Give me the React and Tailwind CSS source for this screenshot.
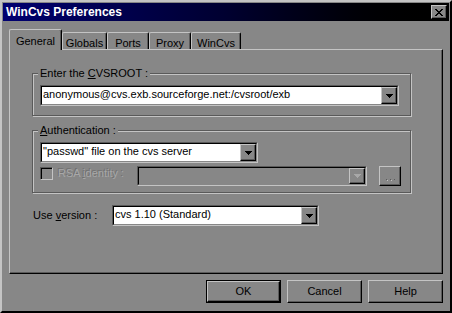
import React from "react";

const Arrow = ({ disabled }) => (
  <svg width="7" height="4" viewBox="0 0 7 4" className="block">
    <path d="M0 0h7v1H0zM1 1h5v1H1zM2 2h3v1H2zM3 3h1v1H3z" fill={disabled ? "#a8a8a8" : "#000"} />
  </svg>
);

const ArrowBtn = ({ disabled }) => (
  <div className="w-[16px] h-full bg-[#878787] border border-t-[#c4c4c4] border-l-[#c4c4c4] border-r-black border-b-black shadow-[inset_-1px_-1px_0_#5a5a5a] flex items-center justify-center">
    <Arrow disabled={disabled} />
  </div>
);

const Combo = ({ className, text, disabled }) => (
  <div className={"flex border border-t-[#5a5a5a] border-l-[#5a5a5a] border-b-[#c4c4c4] border-r-[#c4c4c4] " + className}>
    <div className={"flex-1 flex border border-t-black border-l-black border-b-[#878787] border-r-[#878787] " + (disabled ? "bg-[#878787]" : "bg-white")}>
      <div className="flex-1 pl-[1px] text-[11px] leading-[15px] text-black whitespace-nowrap overflow-hidden">{text}</div>
      <ArrowBtn disabled={disabled} />
    </div>
  </div>
);

const Tab = ({ label, w, selected }) => (
  <div
    className={
      "flex justify-center border-l border-t border-l-[#c4c4c4] border-t-[#c4c4c4] border-r border-r-black rounded-tl-[2px] rounded-tr-[2px] bg-[#878787] text-[11px] text-black shadow-[inset_-1px_0_0_#5a5a5a] " +
      w +
      (selected ? " h-[21px] pt-[3px] relative z-10" : " h-[18px] pt-[2px]")
    }
  >
    {label}
  </div>
);

const Button = ({ label, def }) => (
  <div className={"w-[75px] h-[23px] " + (def ? "border border-black" : "")}>
    <div className="w-full h-full bg-[#878787] border border-t-[#c4c4c4] border-l-[#c4c4c4] border-r-black border-b-black shadow-[inset_-1px_-1px_0_#5a5a5a] flex items-center justify-center text-[11px] text-black">
      {label}
    </div>
  </div>
);

const Group = ({ className, legend, children }) => (
  <div className={"border border-[#5a5a5a] shadow-[1px_1px_0_#c4c4c4,inset_1px_1px_0_#c4c4c4] flex flex-col pl-[7px] " + className}>
    <div className="-mt-[7px] ml-[-2px] self-start bg-[#878787] px-[2px] text-[11px] leading-[13px] text-black">{legend}</div>
    {children}
  </div>
);

export default function App() {
  return (
    <div className="w-[452px] h-[313px] bg-[#878787] border-2 border-t-[#c4c4c4] border-l-[#c4c4c4] border-r-black border-b-black p-[1px] flex flex-col font-['Liberation_Sans',Arial,sans-serif] overflow-hidden">
      <div className="h-[18px] shrink-0 flex items-center justify-between bg-linear-to-r from-[#000070] via-[#000030] to-black pl-[3px] pr-[2px]">
        <span className="text-white font-bold text-[12px] leading-[14px]">WinCvs Preferences</span>
        <div className="w-[16px] h-[14px] bg-[#878787] border border-t-[#c4c4c4] border-l-[#c4c4c4] border-r-black border-b-black shadow-[inset_-1px_-1px_0_#5a5a5a] flex items-center justify-center">
          <svg width="8" height="7" viewBox="0 0 8 7" className="block">
            <path d="M0 0h2v1H0zM6 0h2v1H6zM1 1h2v1H1zM5 1h2v1H5zM2 2h4v1H2zM3 3h2v1H3zM2 4h4v1H2zM1 5h2v1H1zM5 5h2v1H5zM0 6h2v1H0zM6 6h2v1H6z" fill="#000" />
          </svg>
        </div>
      </div>

      <div className="pl-[6px] flex flex-col">
        <div className="mt-[8px] flex items-end -mb-[1px]">
          <Tab label="General" w="w-[53px]" selected />
          <Tab label="Globals" w="w-[45px]" />
          <Tab label="Ports" w="w-[42px]" />
          <Tab label="Proxy" w="w-[42px]" />
          <Tab label="WinCvs" w="w-[50px]" />
        </div>
        <div className="w-[434px] h-[225px] border-l border-t border-l-[#c4c4c4] border-t-[#c4c4c4] border-r border-b border-r-black border-b-black shadow-[inset_-1px_-1px_0_#5a5a5a] flex flex-col pl-[22px]">
          <Group className="mt-[23px] w-[379px] h-[43px]" legend={<>Enter the <u>C</u>VSROOT :</>}>
            <Combo className="mt-[5px] w-[359px] h-[21px]" text="anonymous@cvs.exb.sourceforge.net:/cvsroot/exb" />
          </Group>
          <Group className="mt-[14px] w-[379px] h-[63px]" legend={<><u>A</u>uthentication :</>}>
            <Combo className="mt-[5px] w-[218px] h-[21px]" text={"\"passwd\" file on the cvs server"} />
            <div className="mt-[3px] flex items-start h-[20px]">
              <div className="mt-[1px] w-[13px] h-[13px] border border-t-[#5a5a5a] border-l-[#5a5a5a] border-b-[#c4c4c4] border-r-[#c4c4c4] shadow-[inset_1px_1px_0_#000]" />
              <div className="ml-[5px] w-[79px] text-[11px] leading-[15px] text-[#a8a8a8] [text-shadow:-1px_-1px_0_#707070]">
                RSA <u>i</u>dentity :
              </div>
              <Combo className="w-[230px] h-[20px]" text="" disabled />
              <div className="ml-[12px] w-[22px] h-[20px] bg-[#878787] border border-t-[#c4c4c4] border-l-[#c4c4c4] border-r-black border-b-black shadow-[inset_-1px_-1px_0_#5a5a5a] flex items-end justify-center pb-[4px]">
                <svg width="9" height="2" viewBox="0 0 9 2" className="block">
                  <path d="M0 0h1v1H0zM4 0h1v1H4zM8 0h1v1H8z" fill="#5a5a5a" />
                  <path d="M1 1h1v1H1zM5 1h1v1H5z" fill="#c4c4c4" />
                </svg>
              </div>
            </div>
          </Group>
          <div className="mt-[12px] ml-[1px] flex items-center">
            <div className="w-[79px] text-[11px] text-black">Use <u>v</u>ersion :</div>
            <Combo className="w-[207px] h-[21px]" text="cvs 1.10 (Standard)" />
          </div>
        </div>
        <div className="mt-[6px] w-[434px] flex justify-end gap-[6px]">
          <Button label="OK" def />
          <Button label="Cancel" />
          <Button label="Help" />
        </div>
      </div>
    </div>
  );
}
